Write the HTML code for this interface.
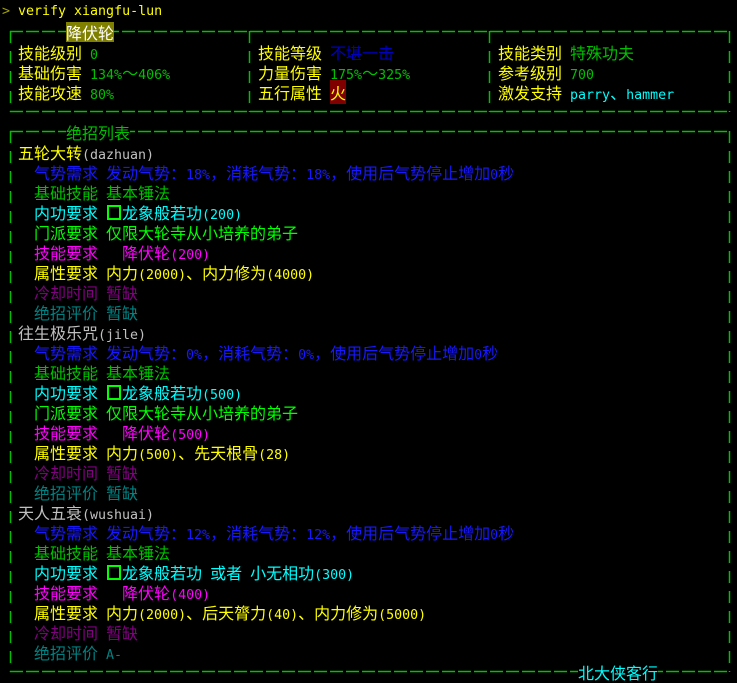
<!DOCTYPE html>
<html><head><meta charset="utf-8"><style>
html,body{margin:0;padding:0;background:#000;width:737px;height:683px;overflow:hidden}
body{position:relative;font-family:"DejaVu Sans Mono","Liberation Mono",monospace;font-size:13.3px;color:#c0c0c0}
.r{position:absolute;height:20px;line-height:20px;white-space:pre}
i{font-style:normal;font-family:"Noto Sans CJK SC","WenQuanYi Zen Hei",sans-serif;font-size:16px;letter-spacing:0;line-height:20px}
.y{color:#ffff00}.g{color:#00c000}.G{color:#00ff00}.b{color:#1818ff}.B{color:#0000c0}.c{color:#00ffff}.m{color:#ff00ff}.p{color:#800080}.t{color:#008080}.w{color:#c0c0c0}
.box{display:inline-block;width:10px;height:11px;border:2px solid #00ff00;margin:0 1px 0 1px;vertical-align:-1px;box-sizing:content-box}
svg{position:absolute;left:0;top:0}
</style></head><body>
<svg width="737" height="683">
<g stroke="#00c000" stroke-width="1.5" fill="none">
<line x1="10" y1="31.5" x2="730" y2="31.5" stroke-dasharray="13 3"/>
<line x1="10" y1="111.5" x2="730" y2="111.5" stroke-dasharray="13 3"/>
<line x1="10" y1="131.5" x2="730" y2="131.5" stroke-dasharray="13 3"/>
<line x1="10" y1="671.5" x2="730" y2="671.5" stroke-dasharray="13 3"/>
<line x1="10.5" y1="31" x2="10.5" y2="112" stroke-dasharray="12 8"/>
<line x1="249.5" y1="31" x2="249.5" y2="112" stroke-dasharray="12 8"/>
<line x1="489.5" y1="31" x2="489.5" y2="112" stroke-dasharray="12 8"/>
<line x1="729.5" y1="31" x2="729.5" y2="112" stroke-dasharray="12 8"/>
<line x1="10.5" y1="131" x2="10.5" y2="672" stroke-dasharray="12 8"/>
<line x1="729.5" y1="131" x2="729.5" y2="672" stroke-dasharray="12 8"/>
</g></svg>
<div class="r" style="top:2px;left:2px;color:#a0a000">&gt;</div>
<div class="r y" style="top:2px;left:18px">verify xiangfu-lun</div>
<div class="r" style="top:22px;left:66px;background:#808000;color:#fff"><i>降伏轮</i></div>

<div class="r" style="top:42px;left:18px"><i class="y">技能级别</i> <span class="g">0</span></div>
<div class="r" style="top:42px;left:258px"><i class="y">技能等级</i> <i class="B">不堪一击</i></div>
<div class="r" style="top:42px;left:498px"><i class="y">技能类别</i> <i class="g">特殊功夫</i></div>
<div class="r" style="top:62px;left:18px"><i class="y">基础伤害</i> <span class="g">134%<i>～</i>406%</span></div>
<div class="r" style="top:62px;left:258px"><i class="y">力量伤害</i> <span class="g">175%<i>～</i>325%</span></div>
<div class="r" style="top:62px;left:498px"><i class="y">参考级别</i> <span class="g">700</span></div>
<div class="r" style="top:82px;left:18px"><i class="y">技能攻速</i> <span class="g">80%</span></div>
<div class="r" style="top:82px;left:258px"><i class="y">五行属性</i> <i class="y" style="background:#800000">火</i></div>
<div class="r" style="top:82px;left:498px"><i class="y">激发支持</i> <span class="c">parry<i>、</i>hammer</span></div>

<div class="r" style="top:122px;left:66px;background:#000"><i class="g">绝招列表</i></div>
<div class="r" style="top:662px;left:578px;background:#000"><i class="c">北大侠客行</i></div>

<div class="r" style="top:142px;left:18px"><i class="y">五轮大转</i>(dazhuan)</div>
<div class="r b" style="top:162px;left:34px"><i>气势需求</i> <i>发动气势：</i>18%<i>，消耗气势：</i>18%<i>，使用后气势停止增加</i>0<i>秒</i></div>
<div class="r g" style="top:182px;left:34px"><i>基础技能</i> <i>基本锤法</i></div>
<div class="r c" style="top:202px;left:34px"><i>内功要求</i> <span class="box"></span><i>龙象般若功</i>(200)</div>
<div class="r G" style="top:222px;left:34px"><i>门派要求</i> <i>仅限大轮寺从小培养的弟子</i></div>
<div class="r m" style="top:242px;left:34px"><i>技能要求</i>   <i>降伏轮</i>(200)</div>
<div class="r y" style="top:262px;left:34px"><i>属性要求</i> <i>内力</i>(2000)<i>、内力修为</i>(4000)</div>
<div class="r p" style="top:282px;left:34px"><i>冷却时间</i> <i>暂缺</i></div>
<div class="r t" style="top:302px;left:34px"><i>绝招评价</i> <i>暂缺</i></div>

<div class="r w" style="top:322px;left:18px"><i>往生极乐咒</i>(jile)</div>
<div class="r b" style="top:342px;left:34px"><i>气势需求</i> <i>发动气势：</i>0%<i>，消耗气势：</i>0%<i>，使用后气势停止增加</i>0<i>秒</i></div>
<div class="r g" style="top:362px;left:34px"><i>基础技能</i> <i>基本锤法</i></div>
<div class="r c" style="top:382px;left:34px"><i>内功要求</i> <span class="box"></span><i>龙象般若功</i>(500)</div>
<div class="r G" style="top:402px;left:34px"><i>门派要求</i> <i>仅限大轮寺从小培养的弟子</i></div>
<div class="r m" style="top:422px;left:34px"><i>技能要求</i>   <i>降伏轮</i>(500)</div>
<div class="r y" style="top:442px;left:34px"><i>属性要求</i> <i>内力</i>(500)<i>、先天根骨</i>(28)</div>
<div class="r p" style="top:462px;left:34px"><i>冷却时间</i> <i>暂缺</i></div>
<div class="r t" style="top:482px;left:34px"><i>绝招评价</i> <i>暂缺</i></div>

<div class="r w" style="top:502px;left:18px"><i>天人五衰</i>(wushuai)</div>
<div class="r b" style="top:522px;left:34px"><i>气势需求</i> <i>发动气势：</i>12%<i>，消耗气势：</i>12%<i>，使用后气势停止增加</i>0<i>秒</i></div>
<div class="r g" style="top:542px;left:34px"><i>基础技能</i> <i>基本锤法</i></div>
<div class="r c" style="top:562px;left:34px"><i>内功要求</i> <span class="box"></span><i>龙象般若功</i> <i>或者</i> <i>小无相功</i>(300)</div>
<div class="r m" style="top:582px;left:34px"><i>技能要求</i>   <i>降伏轮</i>(400)</div>
<div class="r y" style="top:602px;left:34px"><i>属性要求</i> <i>内力</i>(2000)<i>、后天膂力</i>(40)<i>、内力修为</i>(5000)</div>
<div class="r p" style="top:622px;left:34px"><i>冷却时间</i> <i>暂缺</i></div>
<div class="r t" style="top:642px;left:34px"><i>绝招评价</i> A-</div>
</body></html>
